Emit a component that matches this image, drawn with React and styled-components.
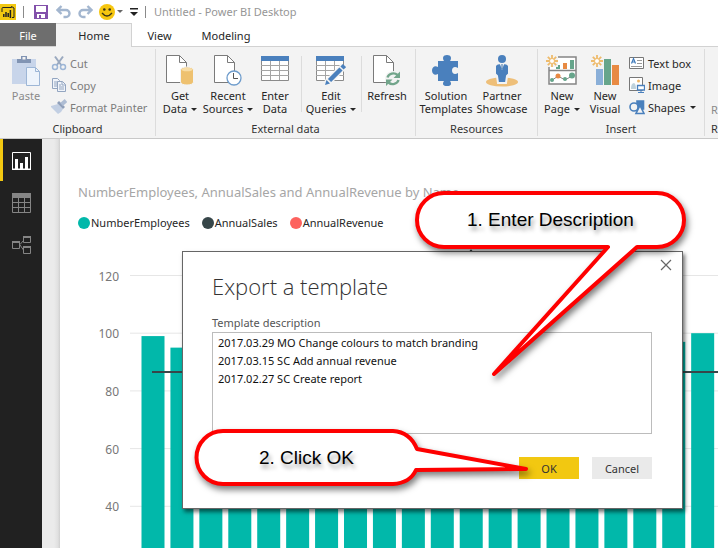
import React from "react";
import styled, { createGlobalStyle } from "styled-components";

const GlobalStyle = createGlobalStyle`
  * { box-sizing: border-box; }
  html, body { margin: 0; height: 100%; }
  body { background: #fff; overflow: hidden; }
  button, textarea { font-family: inherit; }
`;

const Window = styled.div`
  position: relative;
  display: flex;
  flex-direction: column;
  height: 100vh;
  overflow: hidden;
  background: #fff;
  color: #262626;
  font: 12px/14px "Noto Sans", "Open Sans", sans-serif;
`;

/* Title bar */
const TitleBar = styled.header`
  display: flex;
  flex: none;
  align-items: center;
  height: 23px;
  white-space: nowrap;
`;
const IconButton = styled.button`
  display: flex;
  flex: none;
  align-items: center;
  justify-content: flex-start;
  width: ${(p) => p.$w}px;
  height: 20px;
  padding: 0;
  border: 0;
  background: none;
`;
const Rule = styled.span`
  flex: none;
  width: 1px;
  height: 12px;
  margin-right: ${(p) => p.$gap}px;
  background: #8a8a8a;
`;
const AppTitle = styled.h1`
  margin: 0;
  font-size: 11px;
  font-weight: 400;
  color: #969696;
`;

/* Tabs */
const Tabs = styled.nav`
  display: flex;
  flex: none;
  height: 24px;
  border-bottom: 1px solid #d2d2d2;
`;
const Tab = styled.button`
  width: ${(p) => p.$w}px;
  height: ${(p) => (p.$kind === "active" ? 24 : 23)}px;
  padding: 1px 0 0;
  border: 0;
  font-size: 11px;
  color: ${(p) => (p.$kind === "file" ? "#fff" : "#262626")};
  background: ${(p) => (p.$kind === "file" ? "#6e6e6e" : p.$kind === "active" ? "#f3f3f3" : "#fff")};
  box-shadow: ${(p) => (p.$kind === "active" ? "inset -1px 1px 0 #d2d2d2" : "none")};
`;

/* Ribbon */
const Ribbon = styled.section`
  display: flex;
  flex: none;
  height: 92px;
  padding-top: 2px;
  background: #f3f3f3;
  border-bottom: 1px solid #c8c8c8;
  white-space: nowrap;
`;
const Group = styled.div`
  display: flex;
  flex: none;
  flex-direction: column;
  width: ${(p) => p.$w}px;
  height: 87px;
  border-right: 1px solid #dcdcdc;
`;
const GroupBody = styled.div`
  display: flex;
  height: 73px;
  padding-left: 1px;
`;
const GroupLabel = styled.div`
  font-size: 11px;
  text-align: center;
  color: #333;
`;
const BigButton = styled.button`
  display: flex;
  flex: none;
  flex-direction: column;
  align-items: center;
  width: ${(p) => p.$w}px;
  padding: 6px 0 0;
  border: 0;
  background: none;
  font-size: 11px;
  line-height: 13px;
  color: ${(p) => (p.$muted ? "#8a8a8a" : "#262626")};
  white-space: nowrap;
`;
const BigIcon = styled.span`
  display: block;
  height: 34px;
`;
const Divider = styled.span`
  flex: none;
  width: 1px;
  height: 56px;
  margin: 7px 0 0 ${(p) => p.$left}px;
  background: #dcdcdc;
`;
const SmallColumn = styled.div`
  display: flex;
  flex-direction: column;
  padding: 3px 0 0 ${(p) => p.$left || 0}px;
`;
const SmallButton = styled.button`
  display: flex;
  align-items: center;
  gap: 3px;
  height: 22px;
  padding: 0;
  border: 0;
  background: none;
  font-size: 11px;
  color: ${(p) => (p.$muted ? "#7c7c7c" : "#262626")};
`;
const Caret = styled.span`
  display: inline-block;
  margin-left: ${(p) => p.$gap || 4}px;
  vertical-align: 2px;
  border: solid transparent;
  border-width: 3px 3px 0;
  border-top-color: ${(p) => p.$color || "#262626"};
`;
const MoreText = styled.span`
  padding: 54px 0 0 5px;
  color: #8a8a8a;
  font-size: 11px;
`;
const MoreLabel = styled(GroupLabel)`
  padding-left: 6px;
  text-align: left;
`;

/* Workspace */
const Workspace = styled.main`
  display: flex;
  flex: 1;
  min-height: 0;
`;
const Sidebar = styled.aside`
  flex: none;
  width: 42px;
  background: #212121;
`;
const ViewButton = styled.button`
  display: flex;
  align-items: center;
  width: 42px;
  height: 42px;
  padding: 2px 0 0 ${(p) => (p.$active ? 9 : 12)}px;
  border: 0;
  border-left: ${(p) => (p.$active ? "3px solid #f2c811" : "0")};
  background: none;
`;
const Gutter = styled.div`
  flex: none;
  width: 18px;
  background: linear-gradient(90deg, #ebebeb 0 12px, #e0e0e0 16px, #cfcfcf 18px);
`;
const ReportPage = styled.section`
  display: flex;
  flex: 1;
  flex-direction: column;
  min-width: 0;
  padding-top: 45px;
  background: #fff;
`;
const ChartTitle = styled.h2`
  margin: 0 0 0 18px;
  font-size: 13px;
  font-weight: 400;
  line-height: 16px;
  color: #a6a6a6;
  white-space: nowrap;
`;
const Legend = styled.ul`
  display: flex;
  gap: 12px;
  margin: 15px 0 0 18px;
  padding: 0;
  list-style: none;
  font-size: 11px;
  line-height: 16px;
`;
const LegendItem = styled.li`
  display: flex;
  align-items: center;
  gap: 1px;
  &::before {
    content: "";
    width: 12px;
    height: 12px;
    border-radius: 50%;
    background: ${(p) => p.$color};
  }
`;
const ChartSvg = styled.svg`
  display: block;
  width: 100%;
  flex: 1;
  min-height: 0;
  margin-top: 5px;
  text { font-size: 12px; fill: #777; text-anchor: end; }
`;

/* Dialog */
const Dialog = styled.form`
  position: absolute;
  left: 182px;
  top: 251px;
  width: 501px;
  padding: 22px 30px 29px 29px;
  background: #fff;
  border: 1px solid #666;
  box-shadow: 2px 3px 4px rgba(0, 0, 0, 0.55);
`;
const CloseButton = styled.button`
  display: flex;
  position: absolute;
  top: 7px;
  right: 10px;
  width: 12px;
  height: 12px;
  padding: 0;
  border: 0;
  background: none;
`;
const DialogTitle = styled.h2`
  margin: 0;
  font: 300 22px/24px "Open Sans", "Noto Sans", sans-serif;
  color: #333;
`;
const FieldLabel = styled.label`
  display: block;
  margin: 17px 0 1px;
  font-size: 11px;
  line-height: 16px;
  color: #555;
`;
const Description = styled.textarea`
  display: block;
  width: 100%;
  height: 102px;
  padding: 1px 5px;
  border: 1px solid #bcbcbc;
  border-radius: 0;
  outline: 0;
  resize: none;
  background: #fff;
  color: #111;
  font-size: 11px;
  line-height: 18px;
`;
const Actions = styled.div`
  display: flex;
  justify-content: flex-end;
  gap: 13px;
  margin-top: 23px;
`;
const ActionButton = styled.button`
  width: 60px;
  height: 22px;
  padding: 0;
  border: 0;
  font-size: 11px;
  color: #333;
  background: ${(p) => (p.$primary ? "#f2c811" : "#eaeaea")};
`;

/* Callouts */
const Callout = styled.svg`
  position: absolute;
  left: ${(p) => p.$x}px;
  top: ${(p) => p.$y}px;
  overflow: visible;
  pointer-events: none;
  filter: drop-shadow(2px 4px 3px rgba(0, 0, 0, 0.5));
  path { fill: #fff; stroke: #fe0000; stroke-width: 4; stroke-linejoin: round; }
`;
const CalloutText = styled.div`
  position: absolute;
  left: ${(p) => p.$x}px;
  top: ${(p) => p.$y}px;
  font: 19px/22px "Liberation Sans", Arial, sans-serif;
  color: #000;
  text-shadow: 2px 4px 4px rgba(0, 0, 0, 0.4);
  white-space: nowrap;
`;

const Logo = () => (
  <svg width="16" height="16" viewBox="0 0 16 16">
    <path fill="#f2c811" d="M0 0h16v16H0z" />
    <path fill="none" stroke="#222" d="M2 8V4.500Q2 3.500 3 3.500H11.500V2.500L14 4v9.500h-2" />
    <path stroke="#222" strokeWidth="1.500" d="M3.800 10v3M6 8v5M8.200 9v4M10.400 6v8" />
  </svg>
);
const SaveIcon = () => (
  <svg width="14" height="14" viewBox="0 0 14 14">
    <path fill="#8250aa" d="M0 0h14v14H0z" />
    <path fill="#fff" d="M2 1h10v6H2zM3 9h8v4H3z" />
    <path fill="#8250aa" d="M5 10h2v3H5z" />
  </svg>
);
const UndoIcon = ({ flip }) => (
  <svg width="15" height="14" viewBox="0 0 15 14">
    <g transform={flip ? "matrix(-1 0 0 1 15 0)" : undefined} fill="none" stroke="#a3b6cf" strokeWidth="2.400">
      <path d="M5.500 1L1.500 5l4 4M2 5h8a3.500 3.500 0 0 1 0 7H7.500" />
    </g>
  </svg>
);
const SmileIcon = () => (
  <svg width="16" height="16" viewBox="0 0 16 16">
    <circle cx="8" cy="8" r="8" fill="#f6c60f" />
    <circle cx="5.300" cy="5.500" r="1.300" fill="#3b3517" />
    <circle cx="10.700" cy="5.500" r="1.300" fill="#3b3517" />
    <path d="M3 9q5 6 10 0" fill="none" stroke="#3b3517" strokeWidth="1.300" />
  </svg>
);
const PasteIcon = () => (
  <svg width="30" height="32" viewBox="0 0 30 32">
    <path fill="#c8d5ea" d="M1 4h24v25H1z" />
    <path fill="#8194b3" d="M6 4h4V1h6v3h4v4H6z" />
    <path fill="#f3f3f3" d="M11.500 2h3v2.500h-3z" />
    <path fill="#eef4fb" stroke="#9db6d6" d="M15.500 12.500h9l4 4v14h-13z" />
    <path fill="none" stroke="#9db6d6" d="M24.500 12.500v4h4" />
  </svg>
);
const CutIcon = () => (
  <svg width="16" height="16" viewBox="0 0 16 16" fill="none" stroke="#9aa9bf">
    <path strokeWidth="2" d="M4 1.500l6.500 9M12 1.500L5.500 10.500" />
    <circle cx="4" cy="12" r="2.500" strokeWidth="1.500" stroke="#9db6d6" />
    <circle cx="12" cy="12" r="2.500" strokeWidth="1.500" stroke="#9db6d6" />
  </svg>
);
const CopyIcon = () => (
  <svg width="16" height="16" viewBox="0 0 16 16" fill="#f0f4fa" stroke="#93a5c0">
    <path d="M1.500 1.500h5l2 2v8h-7z" />
    <path d="M3 5h4M3 7h3M3 9h3" />
    <path d="M6.500 4.500h5l3 3v7h-8z" />
    <path fill="none" d="M11 4.500V8h3.500M8 8h2M8 10h5M8 12h5" />
  </svg>
);
const BrushIcon = () => (
  <svg width="16" height="16" viewBox="0 0 16 16">
    <path fill="#c2cfe3" d="M0 7l7-2 5 5-2 3-3 2-7-7z" />
    <path fill="#8f9fba" d="M6 4l2-2 6 6-2 2z" />
    <path stroke="#aebdd4" strokeWidth="4" d="M10.500 5.500L15 1.500" />
  </svg>
);
const Doc = () => (
  <>
    <path fill="#fff" stroke="#7a7a7a" d="M.5.500h13l7 7v20H.5z" />
    <path fill="none" stroke="#7a7a7a" d="M13.500.5v7h7" />
  </>
);
const GetDataIcon = () => (
  <svg width="28" height="31" viewBox="0 0 28 31">
    <Doc />
    <path fill="#eec170" stroke="#f3f3f3" d="M14.500 15c0-4 13-4 13 0v12c0 4-13 4-13 0z" />
    <ellipse cx="21" cy="14.500" rx="5.500" ry="1.800" fill="#f8dda6" />
  </svg>
);
const RecentIcon = () => (
  <svg width="28" height="31" viewBox="0 0 28 31">
    <Doc />
    <circle cx="20" cy="23" r="7" fill="#fff" stroke="#6e9ccc" strokeWidth="1.300" />
    <path fill="none" stroke="#555" d="M19.500 18v5.500H24" />
  </svg>
);
const TableGrid = () => (
  <>
    <path fill="#fff" stroke="#8a8a8a" d="M.5 1.500h27v24H.5z" />
    <path fill="#4a80bd" d="M0 1h28v5H0z" />
    <path stroke="#a5a5a5" fill="none" d="M0 10.500h28M0 15.500h28M0 20.500h28M9.500 6v19M18.500 6v19" />
  </>
);
const EnterIcon = () => (
  <svg width="28" height="31" viewBox="0 0 28 31"><TableGrid /></svg>
);
const QueriesIcon = () => (
  <svg width="30" height="31" viewBox="0 0 30 31">
    <TableGrid />
    <path stroke="#f3f3f3" strokeWidth="7" d="M11 28L28 11" />
    <path stroke="#4a80bd" strokeWidth="4.500" d="M13.500 25.500l11.500-11.500M26 13l2.500-2.500" />
    <path fill="#4a80bd" d="M9 30l1.500-5 3.500 3.500z" />
  </svg>
);
const RefreshIcon = () => (
  <svg width="28" height="31" viewBox="0 0 28 31">
    <Doc />
    <circle cx="20" cy="24" r="8" fill="#f3f3f3" />
    <path fill="none" stroke="#72a58b" strokeWidth="2.400" d="M14.500 22.500a6 5.500 0 0 1 10-2.500M25.500 25a6 5.500 0 0 1-10 2.500" />
    <path fill="#72a58b" d="M27 16.500V23h-6.500zM13 31v-6.500h6.500z" />
  </svg>
);
const PuzzleIcon = () => (
  <svg width="28" height="31" viewBox="0 0 28 31">
    <path fill="#4a80bd" d="M6 6h6c-2-3-1-6 3-6s5 3 3 6h8v7c-3-2-6-1-6 2.500s3 4.500 6 2.500v8h-8c2 3 1 5-3 5s-5-2-3-5H6v-7c-3 2-6 0-6-3.500S3 10 6 12z" />
  </svg>
);
const PartnerIcon = () => (
  <svg width="32" height="32" viewBox="0 0 32 32">
    <ellipse cx="16" cy="27" rx="16" ry="4.500" fill="#eebf79" />
    <path stroke="#f3f3f3" strokeWidth="2" fill="#4a80bd" d="M9 11q1-3 7-3t7 3v8l-2 2-1 7h-8l-1-7-2-2z" />
    <circle cx="16" cy="4" r="4" fill="#4a80bd" />
    <path fill="#fff" d="M14 9h4l-2 6z" />
    <path stroke="#2d649f" d="M16 9v5" />
  </svg>
);
const Sun = () => (
  <g stroke="#eebb6c" strokeWidth="1.800">
    <path d="M6 0v12M0 6h12M1.800 1.800l8.400 8.400M10.200 1.800l-8.400 8.400" />
    <circle cx="6" cy="6" r="2.500" fill="#fff" strokeWidth="1" />
  </g>
);
const NewPageIcon = () => (
  <svg width="32" height="31" viewBox="0 0 32 31">
    <path fill="#fff" stroke="#858585" strokeWidth="1.500" d="M3 2h27v27H3zM3 15.500h27" />
    <path fill="#66a58b" d="M10 10h4v4h-4zM24 5h4v9h-4z" />
    <path fill="#e88a43" d="M17 8h4v6h-4z" />
    <path fill="#f3f3f3" d="M0 0h12v12H0z" />
    <path fill="none" stroke="#858585" d="M5 26l7-5 7 4 7-4" />
    <circle cx="6" cy="25" r="2" fill="#66a58b" />
    <circle cx="12" cy="21" r="2.500" fill="#e88a43" />
    <circle cx="19" cy="24" r="2" fill="#66a58b" />
    <circle cx="26" cy="20.500" r="3" fill="#66a58b" />
    <Sun />
  </svg>
);
const NewVisualIcon = () => (
  <svg width="28" height="31" viewBox="0 0 28 31">
    <path fill="#8aafd8" d="M5 14h7v16H5z" />
    <path fill="#66a58b" d="M13 4h7v26h-7z" />
    <path fill="#e88a43" d="M21 10h7v20h-7z" />
    <Sun />
  </svg>
);
const TextBoxIcon = () => (
  <svg width="16" height="16" viewBox="0 0 16 16">
    <path fill="#fff" stroke="#777" d="M.5 2.500h14v11H.5z" />
    <path fill="none" stroke="#3f7abb" strokeWidth="1.200" d="M2.500 8.500l2-5 2 5M3 7h3" />
    <path stroke="#999" d="M8 5.500h5M8 8.500h5M2 11.500h11" />
  </svg>
);
const ImageIcon = () => (
  <svg width="16" height="16" viewBox="0 0 16 16">
    <path fill="#fff" stroke="#777" d="M.5.500h13v13H.5z" />
    <circle cx="9.500" cy="4" r="1.500" fill="#efb768" />
    <path fill="#bfd2dc" d="M2 12q0-6 3-6 2 1 2 6z" />
    <path fill="#fff" stroke="#4a80bd" strokeWidth="1.300" d="M8.500 8.500h7v4.500h-7z" />
    <path stroke="#4a80bd" d="M12 13v2.500M9 15.500h6" />
  </svg>
);
const ShapesIcon = () => (
  <svg width="16" height="16" viewBox="0 0 16 16" stroke="#4a80bd" strokeWidth="1.600">
    <path fill="#4a80bd" d="M8 2h6.500v8H8z" />
    <circle cx="5" cy="8" r="4" fill="#f3f3f3" />
    <path fill="#f3f3f3" d="M11 6.500l4 8H7z" />
  </svg>
);
const ReportIcon = () => (
  <svg width="19" height="19" viewBox="0 0 19 19">
    <path fill="none" stroke="#fff" d="M.5.500h18v17H.5z" />
    <path fill="#fff" d="M3 7h3v11H3zM8 11h3v7H8zM13 5h3v13h-3zM0 16.500h19V18H0z" />
  </svg>
);
const DataIcon = () => (
  <svg width="19" height="20" viewBox="0 0 19 20">
    <path fill="none" stroke="#858585" d="M.5.500h18v19H.5zM0 9.500h19M0 14.500h19M6.500 5v15M12.500 5v15" />
    <path fill="#858585" d="M0 0h19v5H0z" />
  </svg>
);
const ModelIcon = () => (
  <svg width="19" height="18" viewBox="0 0 19 18">
    <path fill="none" stroke="#858585" d="M.5 5.500h7v7h-7zM11.500.5h7v6h-7zM11.500 10.500h7v7h-7zM8 8.500l3.500-4M8 9l3.500 5" />
    <path fill="#858585" d="M0 5h8v2H0zM11 0h8v2h-8zM11 10h8v2h-8z" />
  </svg>
);

const employees = [99, 95, 94, 92, 96, 91, 90, 93, 88, 95, 94, 92, 96, 91, 90, 93, 88, 95, 97, 100];
const ticks = [120, 100, 80, 60, 40];
const scaleY = (v) => 39.5 + (120 - v) * 2.885;

const Chart = () => (
  <ChartSvg role="img" aria-label="Employees, sales and revenue by name">
    {ticks.map((v) => (
      <g key={v}>
        <line x1="70" x2="100%" y1={scaleY(v)} y2={scaleY(v)} stroke="#e6e6e6" />
        <text x="59" y={scaleY(v) + 5}>{v}</text>
      </g>
    ))}
    {employees.map((v, i) => (
      <rect key={i} x={81.5 + i * 28.93} y={scaleY(v)} width="23" height="1200" fill="#01b8aa" />
    ))}
    <path d="M92 136H382L411 14 440 136H2000" fill="none" stroke="#374649" strokeWidth="2" />
  </ChartSvg>
);

const notes = `2017.03.29 MO Change colours to match branding
2017.03.15 SC Add annual revenue
2017.02.27 SC Create report`;

export default function App() {
  return (
    <Window>
      <GlobalStyle />
      <TitleBar>
        <IconButton $w={23} aria-label="Power BI"><Logo /></IconButton>
        <Rule $gap={10} />
        <IconButton $w={22} aria-label="Save"><SaveIcon /></IconButton>
        <IconButton $w={22} aria-label="Undo"><UndoIcon /></IconButton>
        <IconButton $w={21} aria-label="Redo"><UndoIcon flip /></IconButton>
        <IconButton $w={31} aria-label="Feedback"><SmileIcon /><Caret $gap={2} $color="#666" /></IconButton>
        <IconButton $w={15} aria-label="Customize toolbar">
          <svg width="8" height="8" viewBox="0 0 8 8"><path d="M0 0h8v1.500H0zM0 4h8L4 8z" fill="#222" /></svg>
        </IconButton>
        <Rule $gap={8} />
        <AppTitle>Untitled - Power BI Desktop</AppTitle>
      </TitleBar>

      <Tabs>
        <Tab $w={56} $kind="file">File</Tab>
        <Tab $w={76} $kind="active">Home</Tab>
        <Tab $w={55}>View</Tab>
        <Tab $w={78}>Modeling</Tab>
      </Tabs>

      <Ribbon>
        <Group $w={156}>
          <GroupBody>
            <BigButton $w={50} $muted><BigIcon><PasteIcon /></BigIcon>Paste</BigButton>
            <SmallColumn>
              <SmallButton $muted><CutIcon />Cut</SmallButton>
              <SmallButton $muted><CopyIcon />Copy</SmallButton>
              <SmallButton $muted><BrushIcon />Format Painter</SmallButton>
            </SmallColumn>
          </GroupBody>
          <GroupLabel>Clipboard</GroupLabel>
        </Group>
        <Group $w={260}>
          <GroupBody>
            <BigButton $w={46}><BigIcon><GetDataIcon /></BigIcon>Get<span>Data<Caret /></span></BigButton>
            <BigButton $w={50}><BigIcon><RecentIcon /></BigIcon>Recent<span>Sources<Caret /></span></BigButton>
            <BigButton $w={44}><BigIcon><EnterIcon /></BigIcon>Enter<span>Data</span></BigButton>
            <Divider $left={4} />
            <BigButton $w={58}><BigIcon><QueriesIcon /></BigIcon>Edit<span>Queries<Caret /></span></BigButton>
            <Divider $left={1} />
            <BigButton $w={50}><BigIcon><RefreshIcon /></BigIcon>Refresh</BigButton>
          </GroupBody>
          <GroupLabel>External data</GroupLabel>
        </Group>
        <Group $w={122}>
          <GroupBody>
            <BigButton $w={58}><BigIcon><PuzzleIcon /></BigIcon>Solution<span>Templates</span></BigButton>
            <BigButton $w={54}><BigIcon><PartnerIcon /></BigIcon>Partner<span>Showcase</span></BigButton>
          </GroupBody>
          <GroupLabel>Resources</GroupLabel>
        </Group>
        <Group $w={167}>
          <GroupBody>
            <BigButton $w={46}><BigIcon><NewPageIcon /></BigIcon>New<span>Page<Caret /></span></BigButton>
            <BigButton $w={40}><BigIcon><NewVisualIcon /></BigIcon>New<span>Visual</span></BigButton>
            <SmallColumn $left={4}>
              <SmallButton><TextBoxIcon />Text box</SmallButton>
              <SmallButton><ImageIcon />Image</SmallButton>
              <SmallButton><ShapesIcon />Shapes<Caret $gap={2} /></SmallButton>
            </SmallColumn>
          </GroupBody>
          <GroupLabel>Insert</GroupLabel>
        </Group>
        <Group $w={60}>
          <GroupBody><MoreText>R</MoreText></GroupBody>
          <MoreLabel>R</MoreLabel>
        </Group>
      </Ribbon>

      <Workspace>
        <Sidebar>
          <ViewButton $active aria-label="Report"><ReportIcon /></ViewButton>
          <ViewButton aria-label="Data"><DataIcon /></ViewButton>
          <ViewButton aria-label="Relationships"><ModelIcon /></ViewButton>
        </Sidebar>
        <Gutter />
        <ReportPage>
          <ChartTitle>NumberEmployees, AnnualSales and AnnualRevenue by Name</ChartTitle>
          <Legend>
            <LegendItem $color="#01b8aa">NumberEmployees</LegendItem>
            <LegendItem $color="#374649">AnnualSales</LegendItem>
            <LegendItem $color="#fd625e">AnnualRevenue</LegendItem>
          </Legend>
          <Chart />
        </ReportPage>
      </Workspace>

      <Dialog onSubmit={(e) => e.preventDefault()} aria-labelledby="dialog-title">
        <CloseButton type="button" aria-label="Close">
          <svg width="12" height="12" viewBox="0 0 12 12"><path d="M1 1l10 10M11 1L1 11" stroke="#666" strokeWidth="1.200" /></svg>
        </CloseButton>
        <DialogTitle id="dialog-title">Export a template</DialogTitle>
        <FieldLabel htmlFor="description">Template description</FieldLabel>
        <Description id="description" defaultValue={notes} spellCheck={false} />
        <Actions>
          <ActionButton $primary type="submit">OK</ActionButton>
          <ActionButton type="button">Cancel</ActionButton>
        </Actions>
      </Dialog>

      <Callout $x={415} $y={191} width="271" height="186">
        <path d="M29 2H242a27 27 0 0 1 0 54H222L79 183 193 56H29a27 27 0 0 1 0-54z" />
      </Callout>
      <CalloutText $x={467} $y={209}>1. Enter Description</CalloutText>
      <Callout $x={194} $y={429} width="335" height="57">
        <path d="M29 2H199Q216 3 223 20L332 40 222 41Q216 54 199 55H29a26.500 26.500 0 0 1 0-53z" />
      </Callout>
      <CalloutText $x={259} $y={447}>2. Click OK</CalloutText>
    </Window>
  );
}
